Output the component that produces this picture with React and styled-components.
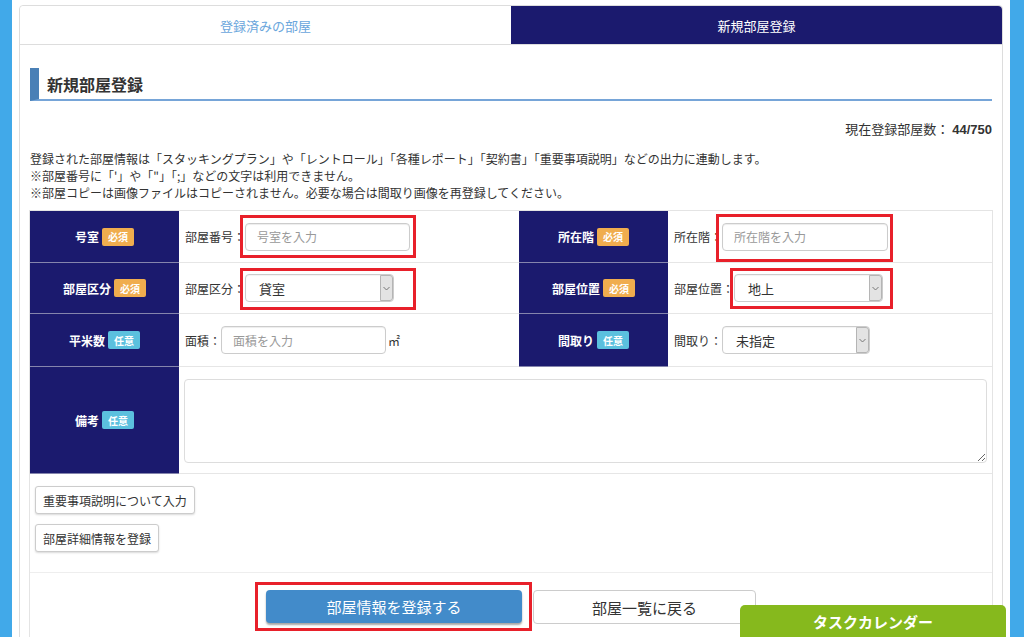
import React from "react";
import styled, { createGlobalStyle } from "styled-components";

const GlobalStyle = createGlobalStyle`
  html, body {
    margin: 0;
    padding: 0;
    height: 100%;
    overflow: hidden;
  }
  body {
    background: #41a9e9;
    font-family: "Noto Sans CJK JP", "Liberation Sans", sans-serif;
    color: #333;
  }
  input, button, textarea {
    font-family: inherit;
  }
`;

const Page = styled.div`
  margin: 0 14px 0 12px;
  padding: 5px 7px 0;
  background: #fff;
  min-height: 637px;
  box-sizing: border-box;
`;

const Card = styled.div`
  border: 1px solid #ddd;
  border-radius: 4px 4px 0 0;
  min-height: 700px;
`;

const Tabs = styled.div`
  display: flex;
  border-bottom: 1px solid #ddd;
`;

const Tab = styled.div`
  flex: 1;
  height: 38px;
  display: flex;
  align-items: center;
  justify-content: center;
  font-size: 13px;
  color: ${(p) => (p.$active ? "#fff" : "#6aa6dc")};
  background: ${(p) => (p.$active ? "#1b1a6e" : "#fff")};
  border-radius: ${(p) => (p.$active ? "0 4px 0 0" : "4px 0 0 0")};
`;

const Body = styled.div`
  padding: 0 10px;
`;

const SectionTitle = styled.h2`
  margin: 23px 0 0;
  height: 33px;
  box-sizing: border-box;
  display: flex;
  align-items: center;
  border-left: 9px solid #4a80b6;
  border-bottom: 2px solid #76a5d8;
  padding-left: 8px;
  font-size: 16px;
  font-weight: bold;
  color: #333;
`;

const Count = styled.p`
  margin: 18px 0 0;
  text-align: right;
  font-size: 13px;
  line-height: 20px;

  b {
    font-family: "Liberation Sans", sans-serif;
    font-weight: bold;
  }
`;

const Notes = styled.div`
  margin-top: 10px;
  font-size: 12px;
  line-height: 17px;
`;

const FormBox = styled.div`
  margin: 9px -1px 0;
  border: 1px solid #e4e4e4;
`;

const Row = styled.div`
  display: flex;
  height: ${(p) => p.$h}px;
`;

const LabelCell = styled.div`
  flex: none;
  width: 149px;
  box-sizing: border-box;
  background: #1b1a6e;
  border-bottom: 1px solid #8585ad;
  color: #fff;
  font-size: 12px;
  font-weight: bold;
  display: flex;
  align-items: center;
  justify-content: center;
  gap: 3px;
`;

const Badge = styled.span`
  display: inline-flex;
  align-items: center;
  height: 18px;
  padding: 0 6px;
  border-radius: 2px;
  font-size: 10px;
  font-weight: bold;
  color: #fff;
  background: ${(p) => (p.$required ? "#f0ad4e" : "#5bc0de")};
`;

const ValueCell = styled.div`
  flex: ${(p) => (p.$grow ? 1 : "none")};
  width: ${(p) => (p.$grow ? "auto" : "340px")};
  box-sizing: border-box;
  border-bottom: 1px solid #e6e6e6;
  display: flex;
  align-items: center;
  padding: ${(p) => p.$pad || "0 6px"};
  font-size: 12px;
`;

const Marked = styled.div`
  position: relative;
  display: inline-flex;

  &::after {
    content: "";
    position: absolute;
    top: ${(p) => -p.$t}px;
    bottom: ${(p) => -p.$b}px;
    left: ${(p) => -p.$l}px;
    right: ${(p) => -p.$r}px;
    border: 3px solid #e8202a;
    pointer-events: none;
  }
`;

const TextInput = styled.input`
  width: ${(p) => p.$w}px;
  height: 28px;
  box-sizing: border-box;
  border: 1px solid #ccc;
  border-radius: 4px;
  padding: 0 11px;
  font-size: 12px;
  color: #333;
  box-shadow: inset 0 1px 1px rgba(0, 0, 0, 0.075);
  outline: none;

  &::placeholder {
    color: #999;
  }
`;

const SelectBox = styled.div`
  width: ${(p) => p.$w}px;
  height: 28px;
  box-sizing: border-box;
  border: 1px solid #ccc;
  border-radius: 4px;
  display: flex;
  align-items: center;
  background: #fff;
  box-shadow: inset 0 1px 1px rgba(0, 0, 0, 0.05);
`;

const SelectValue = styled.span`
  flex: 1;
  padding-left: 13px;
  font-size: 13px;
  color: #333;
`;

const SelectArrow = styled.span`
  width: 13px;
  height: 26px;
  box-sizing: border-box;
  border: 1px solid #b5b5b5;
  border-radius: 0 3px 3px 0;
  background: #e3e3e3;
  display: flex;
  align-items: center;
  justify-content: center;
`;

const Unit = styled.span`
  margin-left: 2px;
`;

const Memo = styled.textarea`
  width: 100%;
  height: 84px;
  box-sizing: border-box;
  border: 1px solid #ddd;
  border-radius: 4px;
  outline: none;
`;

const Tools = styled.div`
  display: flex;
  flex-direction: column;
  align-items: flex-start;
  gap: 10px;
  padding: 12px 5px 20px;
`;

const ToolButton = styled.button`
  height: 28px;
  padding: 0 7px;
  border: 1px solid #ccc;
  border-radius: 3px;
  background: #fff;
  font-size: 12px;
  color: #333;
  box-shadow: 0 1px 2px rgba(0, 0, 0, 0.15);
`;

const Footer = styled.div`
  border-top: 1px solid #eee;
  padding: 17px 0 30px;
  display: flex;
  justify-content: center;
  align-items: flex-start;
  gap: 11px;
`;

const SubmitButton = styled.button`
  width: 256px;
  height: 33px;
  border: none;
  border-radius: 4px;
  background: #428bca;
  color: #fff;
  font-size: 15px;
  box-shadow: 0 2px 2px rgba(0, 0, 0, 0.35);
`;

const BackButton = styled.button`
  width: 223px;
  height: 34px;
  border: 1px solid #ccc;
  border-radius: 4px;
  background: #fff;
  color: #333;
  font-size: 15px;
`;

const TaskTab = styled.div`
  position: fixed;
  right: 18px;
  bottom: 0;
  width: 266px;
  height: 32px;
  border-radius: 5px 5px 0 0;
  background: #86b91d;
  color: #fff;
  font-size: 15px;
  font-weight: bold;
  display: flex;
  align-items: center;
  justify-content: center;
`;

const Chevron = () => (
  <svg width="7" height="5" viewBox="0 0 7 5">
    <polyline points="0.5,1 3.5,4 6.5,1" fill="none" stroke="#777" strokeWidth="1" />
  </svg>
);

const Select = ({ w, value }) => (
  <SelectBox $w={w}>
    <SelectValue>{value}</SelectValue>
    <SelectArrow>
      <Chevron />
    </SelectArrow>
  </SelectBox>
);

const Label = ({ children, required }) => (
  <LabelCell>
    {children}
    <Badge $required={required}>{required ? "必須" : "任意"}</Badge>
  </LabelCell>
);

export default function App() {
  return (
    <>
      <GlobalStyle />
      <Page>
        <Card>
          <Tabs>
            <Tab>登録済みの部屋</Tab>
            <Tab $active>新規部屋登録</Tab>
          </Tabs>
          <Body>
            <SectionTitle>新規部屋登録</SectionTitle>
            <Count>
              現在登録部屋数： <b>44/750</b>
            </Count>
            <Notes>
              登録された部屋情報は「スタッキングプラン」や「レントロール」「各種レポート」「契約書」「重要事項説明」などの出力に連動します。
              <br />
              ※部屋番号に「'」や「"」「;」などの文字は利用できません。
              <br />
              ※部屋コピーは画像ファイルはコピーされません。必要な場合は間取り画像を再登録してください。
            </Notes>

            <FormBox>
              <Row $h={52}>
                <Label required>号室</Label>
                <ValueCell>
                  部屋番号：
                  <Marked $t={8} $b={7} $l={5} $r={6}>
                    <TextInput $w={165} placeholder="号室を入力" />
                  </Marked>
                </ValueCell>
                <Label required>所在階</Label>
                <ValueCell $grow>
                  所在階：
                  <Marked $t={9} $b={11} $l={6} $r={5}>
                    <TextInput $w={166} placeholder="所在階を入力" />
                  </Marked>
                </ValueCell>
              </Row>
              <Row $h={51}>
                <Label required>部屋区分</Label>
                <ValueCell>
                  部屋区分：
                  <Marked $t={6} $b={8} $l={5} $r={22}>
                    <Select w={149} value="貸室" />
                  </Marked>
                </ValueCell>
                <Label required>部屋位置</Label>
                <ValueCell $grow>
                  部屋位置：
                  <Marked $t={6} $b={7} $l={4} $r={10}>
                    <Select w={149} value="地上" />
                  </Marked>
                </ValueCell>
              </Row>
              <Row $h={53}>
                <Label>平米数</Label>
                <ValueCell>
                  面積：
                  <TextInput $w={165} placeholder="面積を入力" />
                  <Unit>㎡</Unit>
                </ValueCell>
                <Label>間取り</Label>
                <ValueCell $grow>
                  間取り：
                  <Select w={148} value="未指定" />
                </ValueCell>
              </Row>
              <Row $h={107}>
                <Label>備考</Label>
                <ValueCell $grow $pad="12px 5px 11px">
                  <Memo />
                </ValueCell>
              </Row>

              <Tools>
                <ToolButton>重要事項説明について入力</ToolButton>
                <ToolButton>部屋詳細情報を登録</ToolButton>
              </Tools>

              <Footer>
                <Marked $t={8} $b={8} $l={11} $r={10}>
                  <SubmitButton>部屋情報を登録する</SubmitButton>
                </Marked>
                <BackButton>部屋一覧に戻る</BackButton>
              </Footer>
            </FormBox>
          </Body>
        </Card>
      </Page>
      <TaskTab>タスクカレンダー</TaskTab>
    </>
  );
}
